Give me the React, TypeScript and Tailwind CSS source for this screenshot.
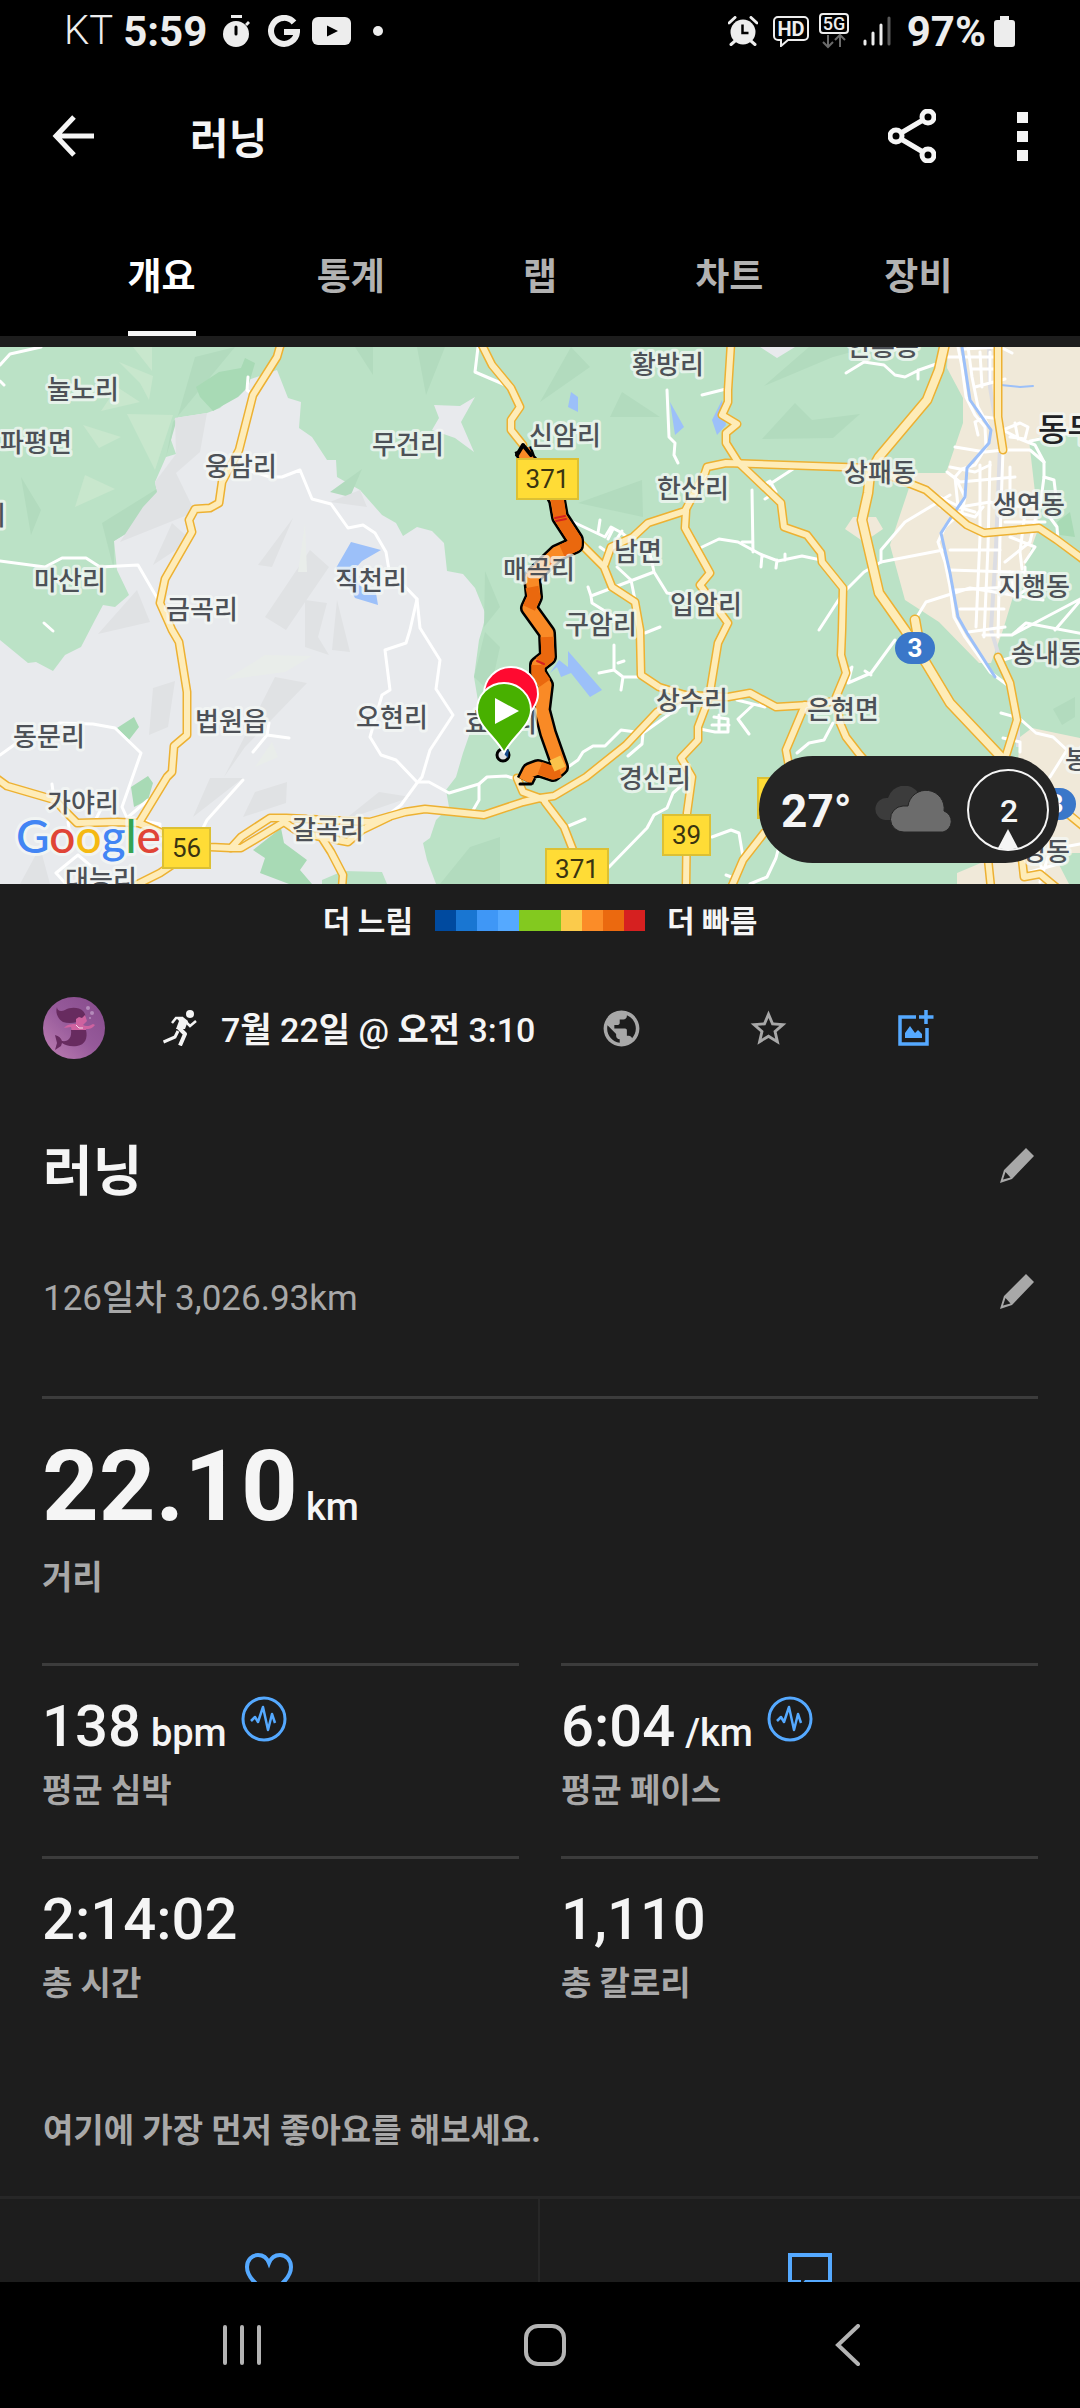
import React, { useState } from "react";
import { MdPublic, MdStarBorder } from "react-icons/md";

const TABS = ["개요", "통계", "랩", "차트", "장비"];

const PACE_COLORS = [
  "bg-[#004a9f]",
  "bg-[#1976d2]",
  "bg-[#3f97f6]",
  "bg-[#55a9ff]",
  "bg-[#83c91f]",
  "bg-[#83c91f]",
  "bg-[#fbcb4b]",
  "bg-[#fb8c28]",
  "bg-[#eb690f]",
  "bg-[#d62020]",
];

// roads with an orange casing
const MAIN_ROADS = [
  "M281 -4 277 10 253 48 239 103 222 135 219 156 210 161 195 162 189 173 192 185 165 232 160 256 172 283 179 295 187 345 187 388 174 399 172 425 167 430 139 476",
  "M-4 431 7 439 55 453 64 463 77 476 117 475 139 476 162 486 210 500 231 501 241 490 270 471 286 471 370 475 405 465 425 462 484 468 523 455 540 451 554 449 586 430 626 398 657 365 685 348",
  "M231 501 241 501 284 475 300 486 348 495 362 483 389 470",
  "M138 537 160 526 172 518",
  "M322 491 331 505 343 528 342 541",
  "M481 -4 492 18 511 41 520 60 511 73 511 83 523 98",
  "M580 196 604 220 612 240 635 255 640 283 641 328 659 340 685 348 728 350 750 346 776 360 809 358 836 354",
  "M605 217 611 200 633 190 648 176 685 164 705 126 707 120 726 116 871 121",
  "M731 -4 728 43 728 55 722 68 737 77 726 86 726 96 738 115 760 136 781 156 784 180 807 188 821 206 822 215 843 241 842 283 841 308 846 326 836 350 840 376 846 390 860 408 875 425",
  "M686 164 685 181 710 226 700 238 728 276 718 296 709 351 698 380 698 393 681 411 692 430 687 466 686 541",
  "M888 128 926 143 967 178 984 186 1039 181 1057 193 1084 213",
  "M998 -4 998 70 1003 103",
  "M998 310 1010 336 1017 373 1004 415",
  "M805 358 786 403 790 425",
  "M545 455 564 480 573 503",
  "M764 486 743 513 731 541",
  "M988 512 991 541",
  "M1022 512 1024 530 1040 527 1057 541",
  "M1062 462 1084 480",
  "M517 431 523 445 545 453",
];

const WIDE_ROADS = [
  "M945 -4 939 23 927 53 879 110 870 126 868 146 862 173 879 246 905 283 926 316 950 356 1003 412",
  "M915 273 918 290",
];

const LOCAL_ROADS = [
  "M0 18 10 7 41 0",
  "M0 34 4 38",
  "M0 214 45 220 62 211 86 211 100 220 138 218 160 256",
  "M248 30 247 43 253 48",
  "M241 121 270 130 282 130 300 123 312 152 331 157 348 181 363 178 375 186 386 205 389 223 417 252 410 283 406 296 385 303 390 343 382 348 370 390 381 408 396 413 417 435 429 435 449 446 479 437 487 430 506 429 520 433",
  "M417 252 420 281 440 313 436 342 453 368 430 403 422 430 417 436 401 458 375 478",
  "M479 437 479 453 472 465",
  "M0 408 21 393 59 376 93 377 115 381 141 406 122 460 127 471 148 453",
  "M127 471 160 477 159 488M52 437 54 452M102 460 95 474M56 526 78 508 92 520M56 526 66 537M68 475 70 487",
  "M243 433 207 473 201 485",
  "M253 405 267 388 289 391M267 388 269 376",
  "M478 0 475 25 510 40",
  "M44 276 53 284",
  "M667 43 669 90 675 96 674 108 678 116",
  "M702 48 726 42",
  "M846 26 864 15 884 18 895 28 905 30 919 23 939 16M918 23 918 32",
  "M569 173 605 190 611 180 622 186 634 196M600 173 598 186M608 192 613 182M616 193 622 184M600 200 611 208",
  "M752 143 753 205M742 195 753 195",
  "M700 201 719 192 738 195 760 207 778 214 802 209 821 213M762 208 761 220M777 213 776 221M785 207 785 213",
  "M617 220 631 233 635 253M650 206 654 225 667 246 690 250M654 225 591 249 592 256 616 271M591 249 588 240M645 286 660 280",
  "M943 203 881 215 864 225 843 246 819 283",
  "M881 215 881 203 905 175 950 148",
  "M915 273 926 255 970 241 1043 253",
  "M895 293 871 326 848 336 852 320 846 326M865 324 871 328",
  "M599 326 614 323 623 330 640 330M614 298 614 323M623 330 621 343M618 316 624 314",
  "M568 420 578 413 583 405 593 399 605 399 621 383 643 386 685 356M643 386 642 397 628 409",
  "M609 520 647 481 654 468 667 461 673 446 688 433",
  "M712 490 731 483 739 486 743 510M726 528 734 531",
  "M778 503 776 511 767 530 750 537",
  "M797 406 809 396 824 393 833 376",
  "M566 480 585 472",
  "M737 353 765 360 750 346M753 358 738 372 749 387M700 382 715 385 728 385 728 372 714 370M719 368 719 385M712 378 729 378",
  "M1019 371 1036 386 1053 390 1067 403 1050 430M1001 366 1019 371",
  "M1003 313 1020 308M1012 288 1026 276 1084 287M983 288 1012 288 1084 250M1055 283 1080 254",
  "M760 140 770 134 776 145 765 152M770 137 793 122",
  "M958 0 962 20 966 50 975 68 985 80 986 100 975 118 962 122 955 130 965 150 962 165 945 180 938 195 945 215 950 240 954 270 965 290 990 325 1010 340",
  "M968 0 972 30 978 60 988 78M948 10 1000 10M975 40 1005 32M972 22 1000 22M980 5 982 40M990 5 990 36M963 2 1000 0M1000 0 1012 6",
  "M940 150 960 160 990 155 1005 160M950 120 975 125 990 118M955 100 985 105 1003 103 1030 103 1044 115 1044 130 1040 160M947 125 960 135 1015 130",
  "M980 118 980 190 976 280M990 115 988 200 984 290M1003 103 1000 190 998 290M1010 120 1010 165M955 130 958 160 975 165",
  "M950 203 1000 203M950 223 1045 226M955 243 1010 240M960 262 1004 262M968 285 1005 280",
  "M1000 160 1050 158M1005 175 1045 175M1010 190 1035 200 1025 215M1025 165 1020 205 1022 222M1037 165 1030 195 1005 215M1046 165 1057 180 1058 195",
  "M1003 83 1020 76 1028 80 1025 92 1010 90M1015 76 1018 92M1003 83 1020 92 1035 98 1044 115M1030 94 1080 84M1044 130 1054 133 1056 150",
  "M975 75 985 70 1000 72M975 75 978 88M1010 225 1015 250 1030 240M1025 220 1025 240M940 160 975 170 983 160",
  "M1040 515 1045 535M1030 525 1065 515M1048 510 1040 535M1064 500 1080 497M1020 395 1020 405M1003 391 1020 395",
];

const GREEN_LIGHT =
  "M133 0H152V24ZM119 15 153 29 149 53 140 36ZM127 67 173 68 155 123ZM83 78 121 90 99 101ZM85 128 115 142 75 160ZM101 64 117 40 140 55Z";
const GREEN_DARK =
  "M21 130 41 163 31 188ZM176 130 157 145 145 175 114 194 114 223 102 176ZM795 56 812 73 860 67 833 91 762 92ZM809 0 764 39 833 10 870 0ZM642 133 578 156 643 170ZM355 0H373V28ZM417 0 426 48 445 0ZM173 75 235 0 195 10 166 110ZM362 122 330 145 350 150ZM485 224 500 260 484 280ZM571 0 540 55 590 20ZM622 45 660 70 610 70ZM474 330 485 285 500 300 490 345ZM470 500 500 490V537H440ZM1053 362 1075 350V370L1062 378Z";
const GREY_DARK =
  "M175 71 207 66 200 105 176 126 195 165 120 195 143 160 157 145 155 135 176 107ZM293 171 272 220 258 218ZM172 176 191 193 153 218ZM310 203 329 220 286 283 265 270ZM305 253 327 256 318 290 329 308 305 300ZM337 253 350 305 332 303ZM275 330 307 336 245 400 224 430ZM153 341 175 334 168 380 149 388ZM379 445 411 450 344 473ZM210 431 243 431 193 470ZM360 143 330 155 367 160ZM137 243 98 287 150 275ZM40 500 20 537H50ZM255 445 287 435 286 456 243 470Z";

interface MapLabel {
  text: string;
  x: number;
  y: number;
}

const LABELS: MapLabel[] = [
  { text: "눌노리", x: 83, y: 42 },
  { text: "파평면", x: 36, y: 95 },
  { text: "웅담리", x: 241, y: 119 },
  { text: "무건리", x: 408, y: 97 },
  { text: "신암리", x: 565, y: 88 },
  { text: "황방리", x: 668, y: 17 },
  { text: "한산리", x: 693, y: 141 },
  { text: "상패동", x: 880, y: 125 },
  { text: "안흥동", x: 883, y: -1 },
  { text: "생연동", x: 1029, y: 157 },
  { text: "지행동", x: 1034, y: 239 },
  { text: "송내동", x: 1047, y: 306 },
  { text: "마산리", x: 70, y: 233 },
  { text: "금곡리", x: 202, y: 262 },
  { text: "직천리", x: 371, y: 233 },
  { text: "매곡리", x: 539, y: 222 },
  { text: "남면", x: 638, y: 204 },
  { text: "입암리", x: 706, y: 257 },
  { text: "구암리", x: 601, y: 277 },
  { text: "리", x: -6, y: 168 },
  { text: "동문리", x: 49, y: 389 },
  { text: "법원읍", x: 231, y: 374 },
  { text: "오현리", x: 392, y: 370 },
  { text: "효촌리", x: 501, y: 375 },
  { text: "상수리", x: 692, y: 353 },
  { text: "은현면", x: 843, y: 362 },
  { text: "경신리", x: 655, y: 431 },
  { text: "가야리", x: 83, y: 455 },
  { text: "갈곡리", x: 328, y: 482 },
  { text: "대능리", x: 101, y: 532 },
  { text: "봉암동", x: 1101, y: 412 },
  { text: "정동", x: 1046, y: 504 },
];

const ROUTE =
  "M523 102 527 113 550 140 557 153 560 170 575 193 575 198 557 206 532 230 534 250 529 261 547 286 548 310 538 318 538 326 545 338 542 363 548 386 560 420 553 426 538 421 530 424 525 434";

const RoadSign = ({ x, y, w, text }: { x: number; y: number; w: number; text: string }) => (
  <g>
    <rect x={x} y={y} width={w} height="40" fill="#ffdc36" stroke="#dcc034" strokeWidth="2" />
    <text x={x + w / 2} y={y + 29} textAnchor="middle" className="fill-[#3a3410] text-[26px]">
      {text}
    </text>
  </g>
);

const HighwayShield = ({ x, y }: { x: number; y: number }) => (
  <g>
    <rect x={x - 20} y={y - 16} width="40" height="32" rx="16" fill="#3a77c9" />
    <text x={x} y={y + 9} textAnchor="middle" className="fill-white text-[26px] font-bold">
      3
    </text>
  </g>
);

const RouteMap = () => (
  <svg viewBox="0 0 1080 537" className="block w-full" role="img" aria-label="러닝 경로 지도">
    <rect width="1080" height="537" fill="#bbe2c6" />
    <path d={GREEN_LIGHT} fill="#c8e7cd" />
    <path
      fill="#e8eaed"
      d="M277 23 288 51 301 55 299 81 312 90 327 113 336 113 337 130 360 143 382 168 396 176 403 189 417 180 432 184 444 196 447 224 463 227 475 241 486 268 482 283 479 293 474 330 479 360 463 406 456 430 446 443 449 460 436 473 430 491 423 496 427 513 436 537H0V293L28 316 36 315 53 324 65 308 81 300 95 273 103 258 115 260 129 248 117 223 114 194 145 175 157 145 155 135 166 110 176 107 171 93 175 71 207 66 220 61 248 33ZM434 58 460 59 475 50 461 75 474 105 455 91 432 83 439 71ZM760 0H795L777 11Z"
    />
    <path d={GREEN_DARK} fill="#b2dbbe" />
    <path d={GREY_DARK} fill="#e0e2e4" />
    <path d="M225 333 265 308 312 309 285 325ZM305 176 307 225 298 225ZM255 420 272 395 278 410Z" fill="#e9edea" />
    <path
      fill="#a8dab5"
      d="M196 40 219 25 241 21 245 11 255 16 248 40 238 50 213 64 200 50ZM253 503 281 481 284 496 307 513 300 523 312 537H289L260 526 265 511ZM117 381 134 370 139 380 129 393ZM131 440 148 429 153 436 148 453 134 460ZM1057 175 1070 165 1075 190 1060 188Z"
    />
    <path d="M322 533 343 524 382 525 387 537H322Z" fill="#bbe2c6" />
    <path
      fill="#f0e9d9"
      d="M948 0 947 21 963 51V76L946 126H914L890 198 905 253 939 275 979 316H991L1003 283 1012 253 1039 180 1029 93 1080 80V0ZM845 182 853 170H876L883 182 864 195ZM1020 390 1032 381 1080 391V506L1053 506 1069 537H957V526L988 513 1010 506Z"
    />
    <path
      fill="#9cc0f9"
      d="M351 195 381 203 362 214 352 225 362 240 376 246 378 258 355 251 347 235 336 221ZM571 45 578 50V65L568 60ZM670 55 684 80 675 88ZM722 53 712 73 717 88 726 78ZM568 304 602 343 590 350 571 326 561 330 557 320 550 326 559 313 568 320Z"
    />
    <path d="M989 0 990 40 1000 100 996 200 991 283 1018 370V400" fill="none" stroke="#dcdde3" strokeWidth="4" />
    <g fill="none" strokeLinejoin="round" strokeLinecap="round">
      {LOCAL_ROADS.map((d) => (
        <path key={d} d={d} stroke="#fff" strokeWidth="3" />
      ))}
      <path
        d="M962 0 970 53 991 83 989 96 967 121 965 150 948 175 941 186 950 226 958 270 967 286 995 330"
        stroke="#9cc0f9"
        strokeWidth="3"
      />
      <path d="M1001 38 1020 40 1033 39" stroke="#9cc0f9" strokeWidth="2" />
      {MAIN_ROADS.map((d) => (
        <path key={d} d={d} stroke="#edb132" strokeWidth="9" />
      ))}
      {WIDE_ROADS.map((d) => (
        <path key={d} d={d} stroke="#edb132" strokeWidth="11" />
      ))}
      {MAIN_ROADS.map((d) => (
        <path key={d} d={d} stroke="#feecb8" strokeWidth="6" />
      ))}
      {WIDE_ROADS.map((d) => (
        <path key={d} d={d} stroke="#feecb8" strokeWidth="8" />
      ))}
      <path d={ROUTE} stroke="#000" strokeWidth="18" strokeLinecap="butt" />
      <path d={ROUTE} stroke="#f98a26" strokeWidth="13" strokeLinecap="butt" />
      <path
        d="M557 150 560 170 575 193 575 198 562 204M532 240 534 250 529 261M547 290 548 310 540 316M538 318 538 326 545 336M560 424 553 426 540 421"
        stroke="#ea680e"
        strokeWidth="13"
        strokeLinecap="butt"
      />
      <path d="M555 411 560 422" stroke="#fbc24a" strokeWidth="12" strokeLinecap="butt" />
      <path d="M555 171 565 169M556 174 566 172M537 314 544 317" stroke="#d62020" strokeWidth="2" />
      <path d="M520 437h11" stroke="#000" strokeWidth="3" />
      <path d="M517 108 523 98 531 108" stroke="#000" strokeWidth="4" />
    </g>

    <g
      textAnchor="middle"
      strokeLinejoin="round"
      className="fill-[#4d5157] stroke-[#f4f8f5]/75 stroke-[6px] text-[26px] font-medium [paint-order:stroke]"
    >
      {LABELS.map((label) => (
        <text key={label.text} x={label.x} y={label.y + 10}>
          {label.text}
        </text>
      ))}
    </g>
    <text
      x="1038"
      y="94"
      strokeLinejoin="round"
      className="fill-[#202124] stroke-[#f4f8f5]/75 stroke-[6px] text-[32px] font-medium [paint-order:stroke]"
    >
      동두천
    </text>

    <RoadSign x={517} y={112} w={61} text="371" />
    <RoadSign x={663} y={468} w={47} text="39" />
    <RoadSign x={546} y={502} w={62} text="371" />
    <RoadSign x={163} y={481} w={47} text="56" />
    <RoadSign x={758} y={431} w={47} text="39" />
    <HighwayShield x={915} y={301} />
    <HighwayShield x={1056} y={457} />

    <circle cx="503" cy="408" r="6" fill="#dfe1e4" stroke="#000" strokeWidth="3" />
    <path d="M503 406 509 402 508 411Z" fill="#174a8c" />
    <path
      d="M511 320a27 27 0 0 1 27 27c0 16-20 30-27 43c-7-13-27-27-27-43a27 27 0 0 1 27-27Z"
      fill="#ff0a30"
      stroke="#fff"
      strokeWidth="2"
    />
    <path
      d="M504 336a27 27 0 0 1 27 27c0 16-20 28-27 43c-7-15-27-27-27-43a27 27 0 0 1 27-27Z"
      fill="#48b000"
      stroke="#fff"
      strokeWidth="2"
    />
    <path d="M495 351v26l24-13Z" fill="#fff" />

    <text
      x="16"
      y="506"
      strokeLinejoin="round"
      className="stroke-[#f4f8f5]/75 stroke-[6px] font-['Lato'] text-[46px] font-medium [paint-order:stroke]"
    >
      <tspan fill="#4285f4">G</tspan>
      <tspan fill="#e04436">o</tspan>
      <tspan fill="#f5b912">o</tspan>
      <tspan fill="#4285f4">g</tspan>
      <tspan fill="#34a353">l</tspan>
      <tspan fill="#e04436">e</tspan>
    </text>
  </svg>
);

const WeatherPill = () => (
  <div className="absolute right-[21px] bottom-[21px] flex h-[107px] w-[300px] items-center rounded-full bg-[#242424] pl-[22px]">
    <span className="w-[92px] pt-1 text-[46px] font-bold">27°</span>
    <svg viewBox="0 0 82 47" className="h-[47px] w-[82px]" aria-hidden="true">
      <path d="M12 34a11 11 0 0 1 3-22a17 17 0 0 1 31-4l-8 26Z" fill="#3c3c3c" />
      <path
        d="M31 46a13 13 0 0 1-1-26h5a18 18 0 0 1 36 5a11 11 0 0 1-1 21Z"
        fill="#6c6c6c"
        stroke="#242424"
        strokeWidth="1"
      />
    </svg>
    <svg viewBox="0 0 84 84" className="ml-[11px] h-[84px] w-[84px]" role="img" aria-label="바람 2">
      <circle cx="42" cy="42" r="40" fill="none" stroke="#f5f5f5" strokeWidth="2" />
      <path d="M42 61 52 80a40 40 0 0 1-20 0Z" fill="#f5f5f5" />
      <text x="43" y="54" textAnchor="middle" className="fill-[#f5f5f5] text-[32px] font-medium">
        2
      </text>
    </svg>
  </div>
);

const StatusBar = () => (
  <div className="flex h-[62px] items-center justify-between pr-[65px] pl-16 text-[#ededed]">
    <div className="flex items-center">
      <span className="text-[40px] font-light">KT</span>
      <span className="ml-[10px] text-[42px] font-bold">5:59</span>
      <svg viewBox="0 0 27 33" className="ml-4 h-[33px] w-[27px]" aria-hidden="true">
        <path d="M8 0h11v3H8ZM22 9l3-3 2 2-3 3Z" fill="currentColor" />
        <circle cx="13" cy="19" r="13" fill="currentColor" />
        <path d="M13 12v7" stroke="#000" strokeWidth="3" strokeLinecap="round" />
      </svg>
      <svg viewBox="0 0 32 33" className="ml-[18px] h-[33px] w-8" fill="none" aria-hidden="true">
        <path d="M26 7.500A13 13 0 1 0 29 17H16" stroke="currentColor" strokeWidth="6" />
      </svg>
      <svg viewBox="0 0 39 28" className="ml-3 h-7 w-[39px]" aria-hidden="true">
        <rect width="39" height="28" rx="6" fill="currentColor" />
        <path d="M15 8.500v11l11-5.500Z" fill="#000" />
      </svg>
      <span className="ml-[22px] size-[10px] rounded-full bg-current" />
    </div>
    <div className="flex items-center">
      <svg viewBox="0 0 30 30" className="size-[30px]" aria-hidden="true">
        <circle cx="15" cy="16" r="12.500" fill="currentColor" />
        <path d="M1 7 7 1.500M29 7 23 1.500M3 28.500 7 25M27 28.500 23 25" stroke="currentColor" strokeWidth="3" strokeLinecap="round" />
        <path d="M14.500 8.500v8.500h6" fill="none" stroke="#000" strokeWidth="2.500" />
      </svg>
      <svg viewBox="0 0 36 31" className="ml-[15px] h-[31px] w-9" aria-hidden="true">
        <path
          d="M5 1h26a4 4 0 0 1 4 4v15a4 4 0 0 1-4 4H15l-7 6v-6H5a4 4 0 0 1-4-4V5a4 4 0 0 1 4-4Z"
          fill="none"
          stroke="currentColor"
          strokeWidth="2"
        />
        <text x="18" y="20" textAnchor="middle" className="fill-current text-[20px] font-bold">
          HD
        </text>
      </svg>
      <svg viewBox="0 0 30 36" className="ml-[10px] h-9 w-[30px]" aria-hidden="true">
        <rect x="1" y="1" width="28" height="19" rx="3" fill="none" stroke="currentColor" strokeWidth="2" />
        <text x="15" y="17" textAnchor="middle" className="fill-current text-[18px] font-medium">
          5G
        </text>
        <path d="M9 22v12M4 29l5 5 5-5M21 34V22M16 27l5-5 5 5" fill="none" stroke="#6a6a6a" strokeWidth="2" />
      </svg>
      <svg viewBox="0 0 28 30" className="ml-[14px] h-[30px] w-7" strokeWidth="3" strokeLinecap="round" aria-hidden="true">
        <path d="M2 25v3M10 17v11M18 9v19" stroke="currentColor" />
        <path d="M26 2v26" stroke="#5a5a5a" />
      </svg>
      <span className="ml-4 text-[42px] font-bold">97%</span>
      <svg viewBox="0 0 21 31" className="ml-[8px] h-[31px] w-[21px]" aria-hidden="true">
        <path d="M6 0h9v4h3a3 3 0 0 1 3 3v21a3 3 0 0 1-3 3H3a3 3 0 0 1-3-3V7a3 3 0 0 1 3-3h3Z" fill="currentColor" />
      </svg>
    </div>
  </div>
);

const Avatar = () => (
  <svg viewBox="0 0 62 62" className="size-[62px]" role="img" aria-label="프로필">
    <defs>
      <linearGradient id="avatar-bg" x1="0" y1="1" x2="1" y2="0">
        <stop offset="0" stopColor="#c080b4" />
        <stop offset="0.500" stopColor="#965a9a" />
        <stop offset="1" stopColor="#854a8b" />
      </linearGradient>
    </defs>
    <circle cx="31" cy="31" r="31" fill="url(#avatar-bg)" />
    <path d="M14 10c0 4 4 5 8 3c5-3 14-3 18 1c3 3 3 7 0 8c-5 4-14 5-20 3C15 22 12 16 14 10Z" fill="#672b5f" />
    <path d="M42 18l2 6-4 4c3 2 7 1 10-1l2 1c-3 4-6 4-9 4v2H29l-1-4-7 1c3-4 8-4 12-4v-5l3-2 3 1Z" fill="#cf62a0" />
    <path d="M28 33h15c2 8-1 15-9 16c-7 1-12-1-15-3l-1 3-6 4 2-7-2-8c4 1 6 3 7 6c6 1 10-3 9-11Z" fill="#672b5f" />
    <path d="M33 28l3 3 4 0" fill="none" stroke="#f7d6e8" strokeWidth="1" />
    <circle cx="45" cy="11" r="2" fill="#b48cbb" />
    <circle cx="49" cy="16" r="2" fill="#b48cbb" />
    <circle cx="47" cy="21" r="1" fill="#b48cbb" />
  </svg>
);

const RunnerIcon = () => (
  <svg viewBox="0 0 34 36" className="h-9 w-[34px]" fill="none" stroke="currentColor" aria-hidden="true">
    <circle cx="27" cy="4" r="4" fill="currentColor" stroke="none" />
    <path d="M13 7 20 7 25 11 22 19 13 19 16 11Z" fill="currentColor" stroke="none" />
    <path d="M20 8h-7l-4 5M23 12l4 4 6-5" strokeWidth="2.500" />
    <path d="M15 17l7 7-5 11.500" strokeWidth="4" strokeLinejoin="round" />
    <path d="M15 21l-3 6-11.500 5" strokeWidth="3" />
  </svg>
);

const AddPhotoIcon = () => (
  <svg viewBox="0 0 36 36" className="size-9" fill="none" stroke="currentColor" aria-hidden="true">
    <path d="M18 7H2v27h27V18M28 0v14M21 7h14.500" strokeWidth="3.500" />
    <path d="M7 28v-5l5-7 5 7 3-3 4 4v4Z" fill="currentColor" stroke="none" />
  </svg>
);

const PencilIcon = () => (
  <svg viewBox="0 0 34 35" className="h-[35px] w-[34px]" fill="#a8a8a8" aria-hidden="true">
    <path fillRule="evenodd" d="M26 0 34 8 12 31 0 35 4 22ZM5.500 24 3 31.500 10.500 29.500Z" />
  </svg>
);

const PulseIcon = () => (
  <svg viewBox="0 0 46 46" className="size-[46px]" fill="none" stroke="#55a9ff" aria-hidden="true">
    <circle cx="23" cy="23" r="21" strokeWidth="3" />
    <path d="M10 25l4-4 3 5 5-15 5 23 4-16 3 9" strokeWidth="2.500" strokeLinejoin="round" />
  </svg>
);

interface StatProps {
  value: string;
  unit?: string;
  label: string;
  pulse?: boolean;
}

const Stat = ({ value, unit, label, pulse }: StatProps) => (
  <div className="h-[193px] border-t-3 border-[#3c3c3c] pt-[26px]">
    <div className="flex h-[68px] items-baseline font-medium">
      <span className="text-[58px] leading-[68px]">{value}</span>
      {unit && <span className="ml-[10px] text-[38px] leading-[68px]">{unit}</span>}
      {pulse && (
        <button type="button" aria-label={`${label} 차트`} className="ml-[14px] self-start pt-1">
          <PulseIcon />
        </button>
      )}
    </div>
    <div className="pt-[6px] text-[33px] leading-[50px] font-bold text-[#a8a8a8]">{label}</div>
  </div>
);

export default function App() {
  const [activeTab, setActiveTab] = useState("개요");

  return (
    <div className="flex h-screen flex-col bg-[#1d1d1d] font-['Roboto','Noto_Sans_CJK_KR',sans-serif] text-[#f5f5f5]">
      <header className="shrink-0 bg-black">
        <StatusBar />
        <div className="flex h-[148px] items-center pr-[52px] pl-[52px]">
          <button type="button" aria-label="뒤로">
            <svg viewBox="0 0 42 42" className="size-[42px]" fill="none" stroke="currentColor" strokeWidth="5">
              <path d="M22 2 4 21 22 40M4 21h38" />
            </svg>
          </button>
          <h1 className="ml-24 pt-2 text-[42px] leading-[62px] font-bold">러닝</h1>
          <button type="button" aria-label="공유" className="ml-auto">
            <svg viewBox="0 0 48 54" className="h-[54px] w-12" fill="none" stroke="currentColor" strokeWidth="5">
              <circle cx="40" cy="8" r="6" />
              <circle cx="8" cy="27" r="6" />
              <circle cx="40" cy="46" r="6" />
              <path d="M13 24 35 11M13 30 35 43" />
            </svg>
          </button>
          <button type="button" aria-label="더보기" className="ml-[81px] flex flex-col gap-2">
            <span className="size-[11px] bg-current" />
            <span className="size-[11px] bg-current" />
            <span className="size-[11px] bg-current" />
          </button>
        </div>
        <div role="tablist" className="grid grid-cols-5 px-[67px]">
          {TABS.map((tab) => (
            <button
              key={tab}
              type="button"
              role="tab"
              aria-selected={tab === activeTab}
              onClick={() => setActiveTab(tab)}
              className={`mx-auto flex h-[126px] items-center border-b-5 pt-[14px] text-[37px] font-bold ${
                tab === activeTab ? "border-[#f5f5f5] text-white" : "border-transparent text-[#b2b2b2]"
              }`}
            >
              {tab}
            </button>
          ))}
        </div>
      </header>

      <main className="min-h-0 flex-1 overflow-y-auto pt-[11px] [scrollbar-width:none]">
        <div className="relative">
          <RouteMap />
          <WeatherPill />
        </div>

        <div className="flex h-[72px] items-center justify-center gap-[22px] text-[30px] font-bold">
          <span className="pt-[2px]">더 느림</span>
          <div className="flex">
            {PACE_COLORS.map((color, i) => (
              <span key={i} className={`size-[21px] ${color}`} />
            ))}
          </div>
          <span className="pt-[2px]">더 빠름</span>
        </div>

        <div className="flex h-[144px] items-center px-[43px]">
          <Avatar />
          <span className="ml-[58px]">
            <RunnerIcon />
          </span>
          <span className="ml-6 pt-1 text-[34px] font-medium">
            7<b>월</b> 22<b>일</b> @ <b>오전</b> 3:10
          </span>
          <div className="ml-auto flex gap-[104px] pr-[100px]">
            <button type="button" aria-label="공개" className="text-[#a8a8a8]">
              <MdPublic size={43} />
            </button>
            <button type="button" aria-label="즐겨찾기" className="text-[#a8a8a8]">
              <MdStarBorder size={43} />
            </button>
            <button type="button" aria-label="사진 추가" className="flex w-[43px] items-center justify-center text-[#55a9ff]">
              <AddPhotoIcon />
            </button>
          </div>
        </div>

        <div className="flex h-[130px] items-center justify-between pr-[46px] pl-[43px]">
          <h2 className="pt-4 text-[54px] leading-[64px] font-bold">러닝</h2>
          <button type="button" aria-label="제목 편집">
            <PencilIcon />
          </button>
        </div>
        <div className="flex h-[122px] items-center justify-between pr-[46px] pl-[43px]">
          <p className="pt-4 text-[35px] text-[#a8a8a8]">
            126<span className="font-medium">일차</span> 3,026.93km
          </p>
          <button type="button" aria-label="메모 편집">
            <PencilIcon />
          </button>
        </div>

        <div className="mx-[42px] mt-11">
          <div className="h-[267px] border-t-3 border-[#3c3c3c] pt-[29px]">
            <div className="flex h-[116px] items-baseline">
              <span className="text-[99px] leading-[116px] font-bold">22.10</span>
              <span className="ml-2 text-[38px] font-medium">km</span>
            </div>
            <div className="pt-[9px] text-[33px] leading-[50px] font-bold text-[#a8a8a8]">거리</div>
          </div>
          <div className="grid grid-cols-2 gap-x-[42px]">
            <Stat value="138" unit="bpm" label="평균 심박" pulse />
            <Stat value="6:04" unit="/km" label="평균 페이스" pulse />
            <Stat value="2:14:02" label="총 시간" />
            <Stat value="1,110" label="총 칼로리" />
          </div>
        </div>

        <p className="mx-[43px] pt-[57px] pb-10 text-[33px] leading-[50px] font-bold text-[#a8a8a8]">
          여기에 가장 먼저 좋아요를 해보세요.
        </p>

        <div className="grid grid-cols-2 border-t-3 border-[#272727] text-[#55a9ff]">
          <button type="button" aria-label="좋아요" className="flex justify-center border-r-2 border-[#272727] py-[54px]">
            <svg viewBox="0 0 50 45" className="h-[45px] w-[50px]" fill="none" stroke="currentColor" strokeWidth="4">
              <path d="M25 42C12 31 3 24 3 14C3 7 8 2 14 2C19 2 23 5 25 10C27 5 31 2 36 2C42 2 47 7 47 14C47 24 38 31 25 42Z" />
            </svg>
          </button>
          <button type="button" aria-label="댓글" className="flex justify-center py-[54px]">
            <svg viewBox="0 0 44 45" className="h-[45px] w-11" fill="none" stroke="currentColor" strokeWidth="4">
              <path d="M2 2h40v27H18L11 38V29H2Z" />
            </svg>
          </button>
        </div>
      </main>

      <nav className="flex h-[126px] shrink-0 items-center justify-between bg-black pr-[212px] pl-[221px] text-[#b4b4b4]">
        <button type="button" aria-label="최근 앱">
          <svg viewBox="0 0 42 42" className="size-[42px]" stroke="currentColor" strokeWidth="4" strokeLinecap="round">
            <path d="M4 3v36M21 3v36M38 3v36" />
          </svg>
        </button>
        <button type="button" aria-label="홈">
          <svg viewBox="0 0 42 42" className="size-[42px]" fill="none" stroke="currentColor" strokeWidth="4">
            <rect x="2" y="2" width="38" height="38" rx="12" />
          </svg>
        </button>
        <button type="button" aria-label="뒤로 가기" className="flex w-[42px] justify-center">
          <svg viewBox="0 0 25 42" className="h-[42px] w-[25px]" fill="none" stroke="currentColor" strokeWidth="4" strokeLinecap="round">
            <path d="M23 2 3 21 23 40" />
          </svg>
        </button>
      </nav>
    </div>
  );
}
